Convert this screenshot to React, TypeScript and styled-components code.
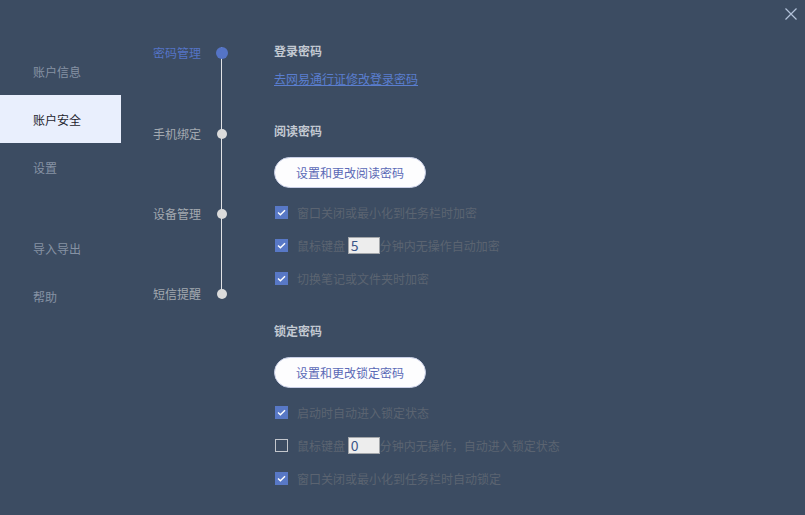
import { createGlobalStyle } from "styled-components"
import styled from "styled-components"

const GlobalStyle = createGlobalStyle`
    html, body {
        margin: 0;
        padding: 0;
        background: #3c4c62;
    }
    body {
        font-family: "Noto Sans CJK SC", "Noto Sans", "Liberation Sans", sans-serif;
        font-size: 12px;
    }
`

const menu = [
    { label: "账户信息" },
    { label: "账户安全", active: true },
    { label: "设置" },
    { label: "导入导出", spaced: true },
    { label: "帮助" },
]

const steps = ["密码管理", "手机绑定", "设备管理", "短信提醒"]

function Check({ checked }: { checked: boolean }) {
    return (
        <Box $checked={checked}>
            {checked && (
                <svg width="9" height="7" viewBox="0 0 9 7">
                    <path d="M1 3.6 L3.4 5.8 L8 1.2" fill="none" stroke="#fff" strokeWidth="1.4" />
                </svg>
            )}
        </Box>
    )
}

export default function App() {
    return (
        <Page>
            <GlobalStyle />
            <CloseButton>
                <svg width="12" height="12" viewBox="0 0 12 12">
                    <path d="M0.5 0.5 L11.5 11.5 M11.5 0.5 L0.5 11.5" stroke="#b3c2da" strokeWidth="1.2" />
                </svg>
            </CloseButton>

            <Sidebar>
                {menu.map(item => (
                    <MenuItem key={item.label} $active={item.active} $spaced={item.spaced}>
                        {item.label}
                    </MenuItem>
                ))}
            </Sidebar>

            <Timeline>
                {steps.map((s, i) => (
                    <Step key={s}>
                        <StepLabel $active={i === 0}>{s}</StepLabel>
                        <DotSlot><Dot $active={i === 0} /></DotSlot>
                    </Step>
                ))}
            </Timeline>

            <Content>
                <Title>登录密码</Title>
                <Link>去网易通行证修改登录密码</Link>

                <Title $gap={36}>阅读密码</Title>
                <PillButton>设置和更改阅读密码</PillButton>
                <Options>
                    <Option><Check checked />窗口关闭或最小化到任务栏时加密</Option>
                    <Option><Check checked />鼠标键盘 <Minutes>5</Minutes>分钟内无操作自动加密</Option>
                    <Option><Check checked />切换笔记或文件夹时加密</Option>
                </Options>

                <Title $gap={35}>锁定密码</Title>
                <PillButton>设置和更改锁定密码</PillButton>
                <Options>
                    <Option><Check checked />启动时自动进入锁定状态</Option>
                    <Option><Check checked={false} />鼠标键盘 <Minutes>0</Minutes>分钟内无操作，自动进入锁定状态</Option>
                    <Option><Check checked />窗口关闭或最小化到任务栏时自动锁定</Option>
                </Options>
            </Content>
        </Page>
    )
}

const Page = styled.div`
    position: relative;
    width: 805px;
    height: 515px;
    display: flex;
    background: #3c4c62;
    overflow: hidden;
`

const CloseButton = styled.div`
    position: absolute;
    top: 8px;
    right: 8px;
    width: 12px;
    height: 12px;
    display: flex;
    cursor: pointer;
`

const Sidebar = styled.div`
    width: 121px;
    padding-top: 47px;
    display: flex;
    flex-direction: column;
`

const MenuItem = styled.div<{ $active?: boolean; $spaced?: boolean }>`
    height: 48px;
    display: flex;
    align-items: center;
    padding-left: 33px;
    margin-top: ${p => (p.$spaced ? "33px" : "0")};
    background: ${p => (p.$active ? "#e9effd" : "transparent")};
    color: ${p => (p.$active ? "#1d232c" : "#8692a4")};
    font-size: 12px;
`

const Timeline = styled.div`
    position: relative;
    width: 153px;
    padding: 45px 0 0 32px;
    box-sizing: border-box;
    display: flex;
    flex-direction: column;
    gap: 64px;

    &::before {
        content: "";
        position: absolute;
        left: 100px;
        top: 47px;
        height: 247px;
        width: 1px;
        background: #e2e3e6;
    }
`

const Step = styled.div`
    display: flex;
    align-items: center;
    gap: 15px;
    height: 16px;
    &:nth-child(2) {
        margin-top: 1px;
    }
`

const StepLabel = styled.span<{ $active?: boolean }>`
    width: 48px;
    line-height: 16px;
    text-align: right;
    color: ${p => (p.$active ? "#5574c6" : "#a3a9b0")};
    white-space: nowrap;
`

const DotSlot = styled.div`
    position: relative;
    z-index: 1;
    width: 12px;
    height: 12px;
    display: flex;
    align-items: center;
    justify-content: center;
`

const Dot = styled.div<{ $active?: boolean }>`
    width: ${p => (p.$active ? "12px" : "10px")};
    height: ${p => (p.$active ? "12px" : "10px")};
    border-radius: 50%;
    background: ${p => (p.$active ? "#5574c6" : "#dcdcdc")};
`

const Content = styled.div`
    flex: 1;
    padding-top: 43px;
    display: flex;
    flex-direction: column;
    align-items: flex-start;
`

const Title = styled.div<{ $gap?: number }>`
    margin-top: ${p => p.$gap ?? 0}px;
    line-height: 16px;
    font-weight: bold;
    color: #c3c9d2;
`

const Link = styled.a`
    margin-top: 12px;
    line-height: 16px;
    color: #5a7ecf;
    text-decoration: underline;
    cursor: pointer;
`

const PillButton = styled.button`
    margin-top: 18px;
    height: 31px;
    width: 152px;
    border-radius: 16px;
    border: 1px solid #c9cfe6;
    background: #fdfdfe;
    color: #5a69b6;
    font-family: inherit;
    font-size: 12px;
    cursor: pointer;
`

const Options = styled.div`
    margin-top: 14px;
    display: flex;
    flex-direction: column;
    gap: 13px;
`

const Option = styled.label`
    height: 20px;
    display: flex;
    align-items: center;
    color: #5b6471;
    white-space: pre;
`

const Box = styled.span<{ $checked: boolean }>`
    width: 13px;
    height: 13px;
    box-sizing: border-box;
    margin: 0 9px 0 1px;
    display: flex;
    align-items: center;
    justify-content: center;
    background: ${p => (p.$checked ? "#5878c6" : "transparent")};
    border: ${p => (p.$checked ? "none" : "1.5px solid #c3c6cc")};
`

const Minutes = styled.span`
    width: 32px;
    height: 17px;
    box-sizing: border-box;
    padding-left: 2px;
    display: flex;
    align-items: center;
    background: #ededed;
    border: 1px solid #a3a6aa;
    color: #3a5688;
    font-size: 14px;
`
